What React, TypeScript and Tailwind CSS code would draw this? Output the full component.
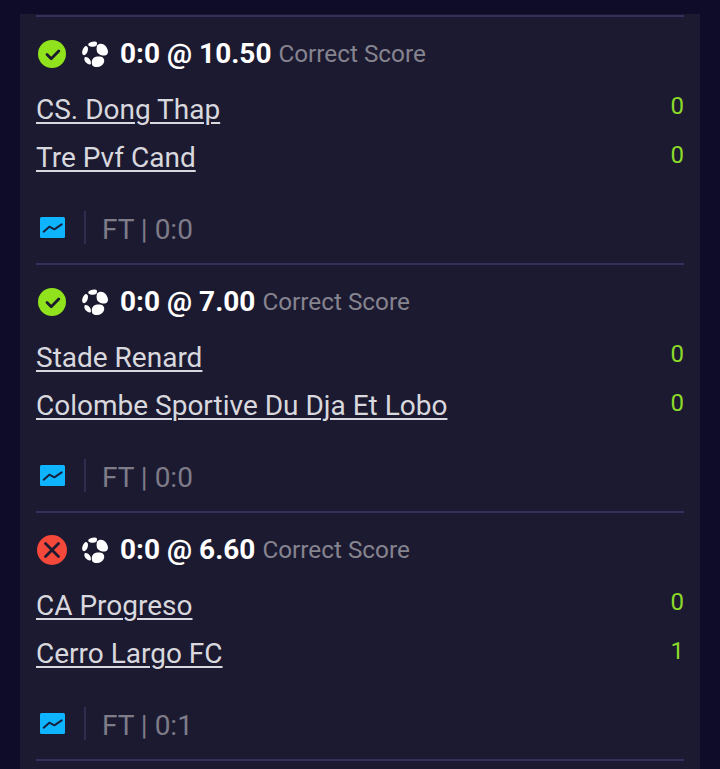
const MATCHES = [
  {
    status: "won",
    score: "0:0",
    odds: "10.50",
    home: "CS. Dong Thap",
    away: "Tre Pvf Cand",
    homeGoals: 0,
    awayGoals: 0,
    result: "FT | 0:0",
  },
  {
    status: "won",
    score: "0:0",
    odds: "7.00",
    home: "Stade Renard",
    away: "Colombe Sportive Du Dja Et Lobo",
    homeGoals: 0,
    awayGoals: 0,
    result: "FT | 0:0",
  },
  {
    status: "lost",
    score: "0:0",
    odds: "6.60",
    home: "CA Progreso",
    away: "Cerro Largo FC",
    homeGoals: 0,
    awayGoals: 1,
    result: "FT | 0:1",
  },
];

function StatusIcon({ status }: { status: string }) {
  if (status === "won") {
    return (
      <svg width="28" height="28" viewBox="0 0 28 28" className="shrink-0">
        <circle cx="14" cy="14" r="14" fill="#8fe21c" />
        <path d="M9 14.500l4.200 4.200L20.800 11" fill="none" stroke="#1c1a30" strokeWidth="2.800" strokeLinecap="round" strokeLinejoin="round" />
      </svg>
    );
  }
  return (
    <svg width="30" height="30" viewBox="0 0 30 30" className="shrink-0 -ml-px">
      <circle cx="15" cy="15" r="15" fill="#f4483a" />
      <path d="M8.500 8.500l13 13M21.500 8.500l-13 13" fill="none" stroke="#1c1a30" strokeWidth="2.800" strokeLinecap="round" />
    </svg>
  );
}

// football: five white patches around a dark centre
function BallIcon() {
  return (
    <svg width="26" height="26" viewBox="0 0 26 26" className="shrink-0" fill="#fff">
      <path d="M6.500 2.500C8.500.5 13.500-.2 14.800 1.200 15.500 3 14.500 5 12.500 5.600 10.500 6.200 7.800 5.600 6.500 4.500 6.200 3.800 6.200 3 6.500 2.500Z" />
      <path d="M15.300 4.300C16.500 2.300 19.500 2.200 21.800 3.500 24.500 5.200 26 8.500 26 11 25.800 13.300 24.500 14.500 22.500 14.600 19.800 14.700 16.500 13.500 15.300 11.500 14.300 9.500 14.300 6.200 15.300 4.300Z" />
      <path d="M3.300 5.200C4.800 4.800 5.900 6 6 7.800 6.100 10 5 13 3 14 1.500 14.500.3 13.800.2 12 0 9.800 1.500 6.200 3.300 5.200Z" />
      <path d="M3.200 16C4.800 15.500 6.800 16.800 8 18.700 9 20.500 9.300 22.500 8.500 23.300 7.500 24 5.500 23 4 21.500 2.500 20 1.500 17.500 3.200 16Z" />
      <path d="M11.500 17C14.200 15.200 18.800 15.200 20.800 16.600 22.500 18 22.700 20.500 21.300 22.700 19.700 25.300 15.500 26.500 12.800 26 10.600 25.500 9.800 23.800 9.800 21.800 9.800 19.800 10.300 18 11.500 17Z" />
    </svg>
  );
}

function ChartIcon() {
  return (
    <svg width="25" height="21" viewBox="0 0 25 21" className="shrink-0">
      <rect width="25" height="21" rx="1.500" fill="#0fb4ff" />
      <path d="M3.700 14.700 9.300 9.700 14.300 12.300 21.700 7.300" fill="none" stroke="#14213f" strokeWidth="2" strokeLinejoin="round" strokeLinecap="round" />
    </svg>
  );
}

function MatchCard({ match }: { match: (typeof MATCHES)[number] }) {
  return (
    <div className="h-[248px] border-b-2 border-[#332f58]">
      <div className="flex h-[74px] items-center">
        <div className="flex w-[33px] justify-start pl-[2px]">
          <StatusIcon status={match.status} />
        </div>
        <div className="ml-[13px]">
          <BallIcon />
        </div>
        <span className="ml-[12px] text-[28px] font-bold text-white">
          {match.score} @ {match.odds}
        </span>
        <span className="ml-[7px] text-[24.3px] text-[#85848f]">Correct Score</span>
      </div>
      <div className="mt-[-5px] flex h-[48px] items-center justify-between">
        <a className="text-[28px] text-[#d8d8de] underline underline-offset-[3px] decoration-[2px]">{match.home}</a>
        <span className="mb-[9px] text-[24px] text-[#8cd92a]">{match.homeGoals}</span>
      </div>
      <div className="flex h-[48px] items-center justify-between">
        <a className="text-[28px] text-[#d8d8de] underline underline-offset-[3px] decoration-[2px]">{match.away}</a>
        <span className="mb-[7px] text-[24px] text-[#8cd92a]">{match.awayGoals}</span>
      </div>
      <div className="mt-[22px] flex items-center">
        <div className="ml-[4px]">
          <ChartIcon />
        </div>
        <div className="ml-[19px] h-[33px] w-[2px] bg-[#2f2c4e]" />
        <span className="ml-[16px] mt-[5px] text-[28px] text-[#7d7c88]">{match.result}</span>
      </div>
    </div>
  );
}

export default function App() {
  return (
    <div className="h-[769px] overflow-hidden bg-[#0f0c29] px-[20px] pt-[14px] font-['Roboto',sans-serif]">
      <div className="h-[755px] bg-[#1c1a30] px-[16px]">
        <div className="border-b-2 border-[#332f58] h-[3px]" />
        {MATCHES.map((m) => (
          <MatchCard key={m.odds} match={m} />
        ))}
      </div>
    </div>
  );
}
